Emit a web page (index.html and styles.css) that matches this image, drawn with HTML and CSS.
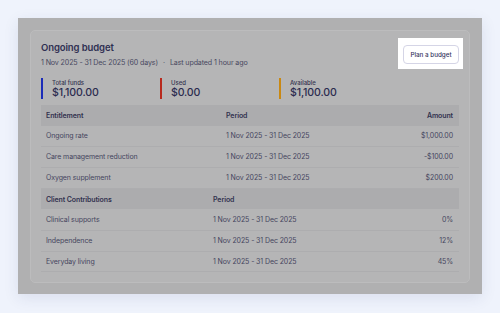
FILE: index.html
```html
<!DOCTYPE html>
<html>
<head>
<meta charset="utf-8">
<link rel="stylesheet" href="styles.css">
</head>
<body>
<div class="frame">
  <div class="card">
    <div class="head">
      <div class="head-text">
        <h1 class="title">Ongoing budget</h1>
        <p class="sub">1 Nov 2025 - 31 Dec 2025 (60 days)<span class="dot">·</span>Last updated 1 hour ago</p>
      </div>
      <div class="spot">
        <button class="btn">Plan a budget</button>
      </div>
    </div>
    <div class="stats">
      <div class="stat stat-blue"><span class="stat-label">Total funds</span><span class="stat-value">$1,100.00</span></div>
      <div class="stat stat-red"><span class="stat-label">Used</span><span class="stat-value">$0.00</span></div>
      <div class="stat stat-orange"><span class="stat-label">Available</span><span class="stat-value">$1,100.00</span></div>
    </div>
    <table class="tbl tbl-1">
      <colgroup><col class="c1"><col class="c2"><col class="c3"></colgroup>
      <tr class="th"><td>Entitlement</td><td>Period</td><td class="r">Amount</td></tr>
      <tr><td>Ongoing rate</td><td>1 Nov 2025 - 31 Dec 2025</td><td class="r">$1,000.00</td></tr>
      <tr><td>Care management reduction</td><td>1 Nov 2025 - 31 Dec 2025</td><td class="r">-$100.00</td></tr>
      <tr><td>Oxygen supplement</td><td>1 Nov 2025 - 31 Dec 2025</td><td class="r">$200.00</td></tr>
    </table>
    <table class="tbl tbl-2">
      <colgroup><col class="c1"><col class="c2"><col class="c3"></colgroup>
      <tr class="th"><td>Client Contributions</td><td>Period</td><td class="r"></td></tr>
      <tr><td>Clinical supports</td><td>1 Nov 2025 - 31 Dec 2025</td><td class="r">0%</td></tr>
      <tr><td>Independence</td><td>1 Nov 2025 - 31 Dec 2025</td><td class="r">12%</td></tr>
      <tr><td>Everyday living</td><td>1 Nov 2025 - 31 Dec 2025</td><td class="r">45%</td></tr>
    </table>
  </div>
</div>
</body>
</html>
```
FILE: styles.css
```css
* { box-sizing: border-box; }
html, body { margin: 0; padding: 0; }
body {
  background: #eff3fc;
  font-family: Inter, "Noto Sans", sans-serif;
  width: 500px;
  height: 313px;
  overflow: hidden;
}
.frame {
  margin: 18px;
  width: 464px;
  height: 276px;
  background: #b0b0b1;
  padding: 12px 12px 11px;
  box-shadow: 0 4px 14px rgba(40, 50, 110, 0.10);
}
.card {
  background: #b5b5b6;
  border: 1px solid #bcbcbd;
  border-radius: 5px;
  padding: 10px 10px 10px;
  height: 100%;
}
.head {
  display: flex;
  justify-content: space-between;
  align-items: flex-start;
}
.title {
  margin: 0;
  font-size: 9.5px;
  line-height: 14px;
  font-weight: 600;
  color: #2f2f52;
  letter-spacing: -0.1px;
}
.sub {
  margin: 3px 0 0;
  font-size: 7.1px;
  line-height: 10px;
  color: #48485f;
  letter-spacing: -0.12px;
}
.dot { margin: 0 5px; color: #5a5a70; }
.spot {
  position: relative;
  margin-top: 4px;
}
.spot::before {
  content: "";
  position: absolute;
  left: -5px; right: -4px; top: -7px; bottom: -5px;
  background: #ffffff;
}
.btn {
  position: relative;
  display: block;
  width: 56px;
  height: 19px;
  padding: 0;
  background: #ffffff;
  border: 1px solid #d5d5e6;
  border-radius: 4px;
  font-family: inherit;
  font-size: 6.3px;
  font-weight: 500;
  color: #35355e;
}
.stats {
  display: flex;
  margin-top: 10px;
}
.stat {
  width: 119px;
  display: flex;
  flex-direction: column;
  border-left: 2.5px solid #1b2cb8;
  padding-left: 9px;
  height: 21px;
  justify-content: center;
}
.stat-red { border-left-color: #b82a1e; }
.stat-orange { border-left-color: #c98812; }
.stat-label {
  font-size: 6px;
  line-height: 8px;
  font-weight: 500;
  color: #34344f;
}
.stat-value {
  font-size: 10.6px;
  line-height: 12px;
  font-weight: 500;
  color: #2b2b4e;
  letter-spacing: -0.15px;
}
.tbl {
  width: 418px;
  border-collapse: collapse;
  table-layout: fixed;
  font-size: 7px;
  color: #45455e;
}
.tbl-1 { margin-top: 6px; }
.tbl-1 .c1 { width: 180px; }
.tbl-2 .c1 { width: 167px; }
.tbl .c2 { width: 160px; }
.tbl td {
  height: 20.8px;
  padding: 0 5px;
  border-bottom: 1px solid #adadaf;
  white-space: nowrap;
  letter-spacing: -0.1px;
}
.tbl .th td {
  background: #acacae;
  font-weight: 600;
  color: #32324f;
  border-bottom: none;
}
.tbl .r { text-align: right; padding-right: 6px; }
```
